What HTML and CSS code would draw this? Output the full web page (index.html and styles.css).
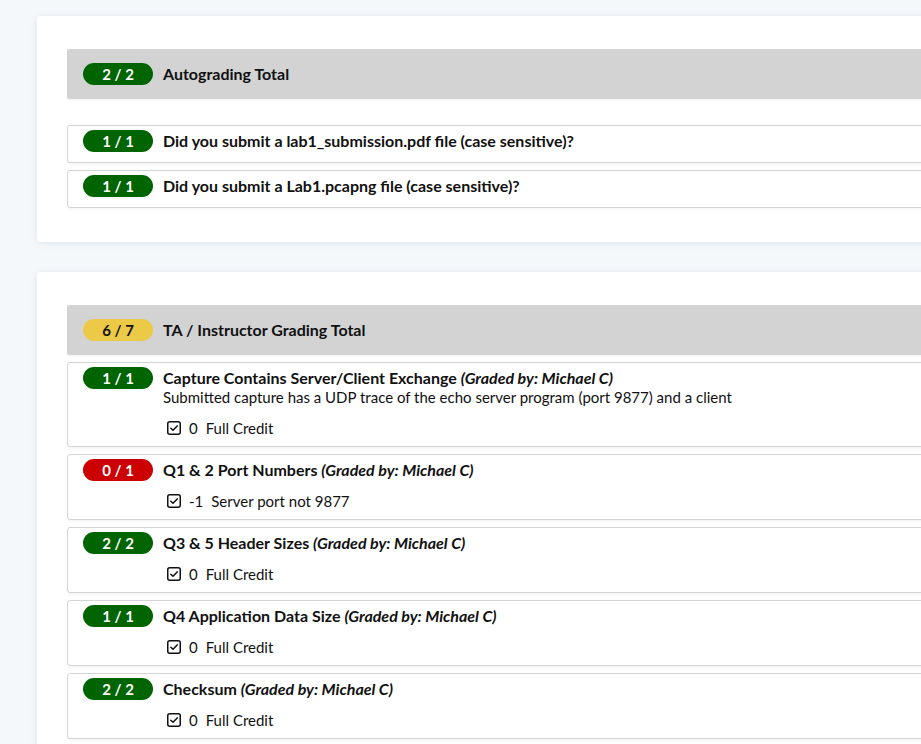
FILE: index.html
```html
<!DOCTYPE html>
<html>
<head>
<meta charset="utf-8">
<link rel="stylesheet" href="styles.css">
</head>
<body>
<div class="page">
  <section class="card">
    <div class="total">
      <span class="badge green">2 / 2</span>
      <span class="title">Autograding Total</span>
    </div>
    <div class="items first">
      <div class="item simple">
        <div class="row">
          <span class="badge green">1 / 1</span>
          <span class="title">Did you submit a lab1_submission.pdf file (case sensitive)?</span>
        </div>
      </div>
      <div class="item simple">
        <div class="row">
          <span class="badge green">1 / 1</span>
          <span class="title">Did you submit a Lab1.pcapng file (case sensitive)?</span>
        </div>
      </div>
    </div>
  </section>

  <section class="card">
    <div class="total">
      <span class="badge yellow">6 / 7</span>
      <span class="title">TA / Instructor Grading Total</span>
    </div>
    <div class="items">
      <div class="item">
        <div class="row">
          <span class="badge green">1 / 1</span>
          <div class="body">
            <div class="title">Capture Contains Server/Client Exchange <em>(Graded by: Michael C)</em></div>
            <div class="desc">Submitted capture has a UDP trace of the echo server program (port 9877) and a client</div>
            <div class="mark"><svg class="check" viewBox="0 0 14 14"><rect x="0.75" y="0.75" width="12.5" height="12.5" rx="2" fill="none" stroke="#111" stroke-width="1.5"/><path d="M3.8 7.2 L6 9.3 L10.2 4.9" fill="none" stroke="#111" stroke-width="1.5" stroke-linecap="round" stroke-linejoin="round"/></svg><span class="pts">0</span><span>Full Credit</span></div>
          </div>
        </div>
      </div>
      <div class="item">
        <div class="row">
          <span class="badge red">0 / 1</span>
          <div class="body">
            <div class="title">Q1 &amp; 2 Port Numbers <em>(Graded by: Michael C)</em></div>
            <div class="mark"><svg class="check" viewBox="0 0 14 14"><rect x="0.75" y="0.75" width="12.5" height="12.5" rx="2" fill="none" stroke="#111" stroke-width="1.5"/><path d="M3.8 7.2 L6 9.3 L10.2 4.9" fill="none" stroke="#111" stroke-width="1.5" stroke-linecap="round" stroke-linejoin="round"/></svg><span class="pts">-1</span><span>Server port not 9877</span></div>
          </div>
        </div>
      </div>
      <div class="item">
        <div class="row">
          <span class="badge green">2 / 2</span>
          <div class="body">
            <div class="title">Q3 &amp; 5 Header Sizes <em>(Graded by: Michael C)</em></div>
            <div class="mark"><svg class="check" viewBox="0 0 14 14"><rect x="0.75" y="0.75" width="12.5" height="12.5" rx="2" fill="none" stroke="#111" stroke-width="1.5"/><path d="M3.8 7.2 L6 9.3 L10.2 4.9" fill="none" stroke="#111" stroke-width="1.5" stroke-linecap="round" stroke-linejoin="round"/></svg><span class="pts">0</span><span>Full Credit</span></div>
          </div>
        </div>
      </div>
      <div class="item">
        <div class="row">
          <span class="badge green">1 / 1</span>
          <div class="body">
            <div class="title">Q4 Application Data Size <em>(Graded by: Michael C)</em></div>
            <div class="mark"><svg class="check" viewBox="0 0 14 14"><rect x="0.75" y="0.75" width="12.5" height="12.5" rx="2" fill="none" stroke="#111" stroke-width="1.5"/><path d="M3.8 7.2 L6 9.3 L10.2 4.9" fill="none" stroke="#111" stroke-width="1.5" stroke-linecap="round" stroke-linejoin="round"/></svg><span class="pts">0</span><span>Full Credit</span></div>
          </div>
        </div>
      </div>
      <div class="item">
        <div class="row">
          <span class="badge green">2 / 2</span>
          <div class="body">
            <div class="title">Checksum <em>(Graded by: Michael C)</em></div>
            <div class="mark"><svg class="check" viewBox="0 0 14 14"><rect x="0.75" y="0.75" width="12.5" height="12.5" rx="2" fill="none" stroke="#111" stroke-width="1.5"/><path d="M3.8 7.2 L6 9.3 L10.2 4.9" fill="none" stroke="#111" stroke-width="1.5" stroke-linecap="round" stroke-linejoin="round"/></svg><span class="pts">0</span><span>Full Credit</span></div>
          </div>
        </div>
      </div>
    </div>
  </section>
</div>
</body>
</html>
```

FILE: styles.css
```css
html {
  overflow: hidden;
}
body {
  margin: 0;
  background: #f4f8fb;
  font-family: Lato, "Liberation Sans", sans-serif;
  font-size: 15px;
  color: #111;
}
.page {
  width: 1100px;
  padding: 16px 0 0 37px;
  display: flex;
  flex-direction: column;
  gap: 30px;
}
.card {
  background: #fff;
  border-radius: 3px;
  box-shadow: 0 1px 6px rgba(160, 180, 200, 0.25);
  padding: 33px 30px 34px 30px;
}
.total {
  background: #d3d3d3;
  border-radius: 2px;
  height: 50px;
  padding: 0 16px;
  display: flex;
  align-items: center;
  gap: 10px;
  box-shadow: 0 1px 2px rgba(0,0,0,0.06);
}
.title {
  font-weight: 700;
  font-size: 16px;
  line-height: 20px;
}
.badge {
  flex: none;
  width: 70px;
  height: 22px;
  border-radius: 11px;
  display: inline-flex;
  align-items: center;
  justify-content: center;
  color: #fff;
  font-weight: 700;
  font-size: 15px;
}
.badge.green { background: #006400; }
.badge.red { background: #cc0000; }
.badge.yellow { background: #ecc946; color: #111; }
.items {
  margin-top: 7px;
  display: flex;
  flex-direction: column;
  gap: 7px;
}
.items.first {
  margin-top: 26px;
}
.item {
  border: 1px solid #d5d5d5;
  border-radius: 3px;
  padding: 5px 15px 7px 15px;
  box-shadow: 0 2px 3px rgba(0,0,0,0.04);
}
.item.simple {
  padding: 4px 15px 10px 15px;
}
.item .row .badge {
  margin-top: -1px;
}
.item.simple .row .badge {
  margin-top: 0;
}
.row {
  display: flex;
  align-items: flex-start;
  gap: 10px;
}
.item.simple .row {
  align-items: center;
}
.desc {
  line-height: 19px;
  font-size: 15px;
}
.mark {
  display: flex;
  align-items: center;
  margin-top: 10px;
  padding-left: 4px;
  line-height: 22px;
}
.check {
  width: 14px;
  height: 14px;
  margin-right: 8px;
}
.pts {
  margin-right: 8px;
}
```
